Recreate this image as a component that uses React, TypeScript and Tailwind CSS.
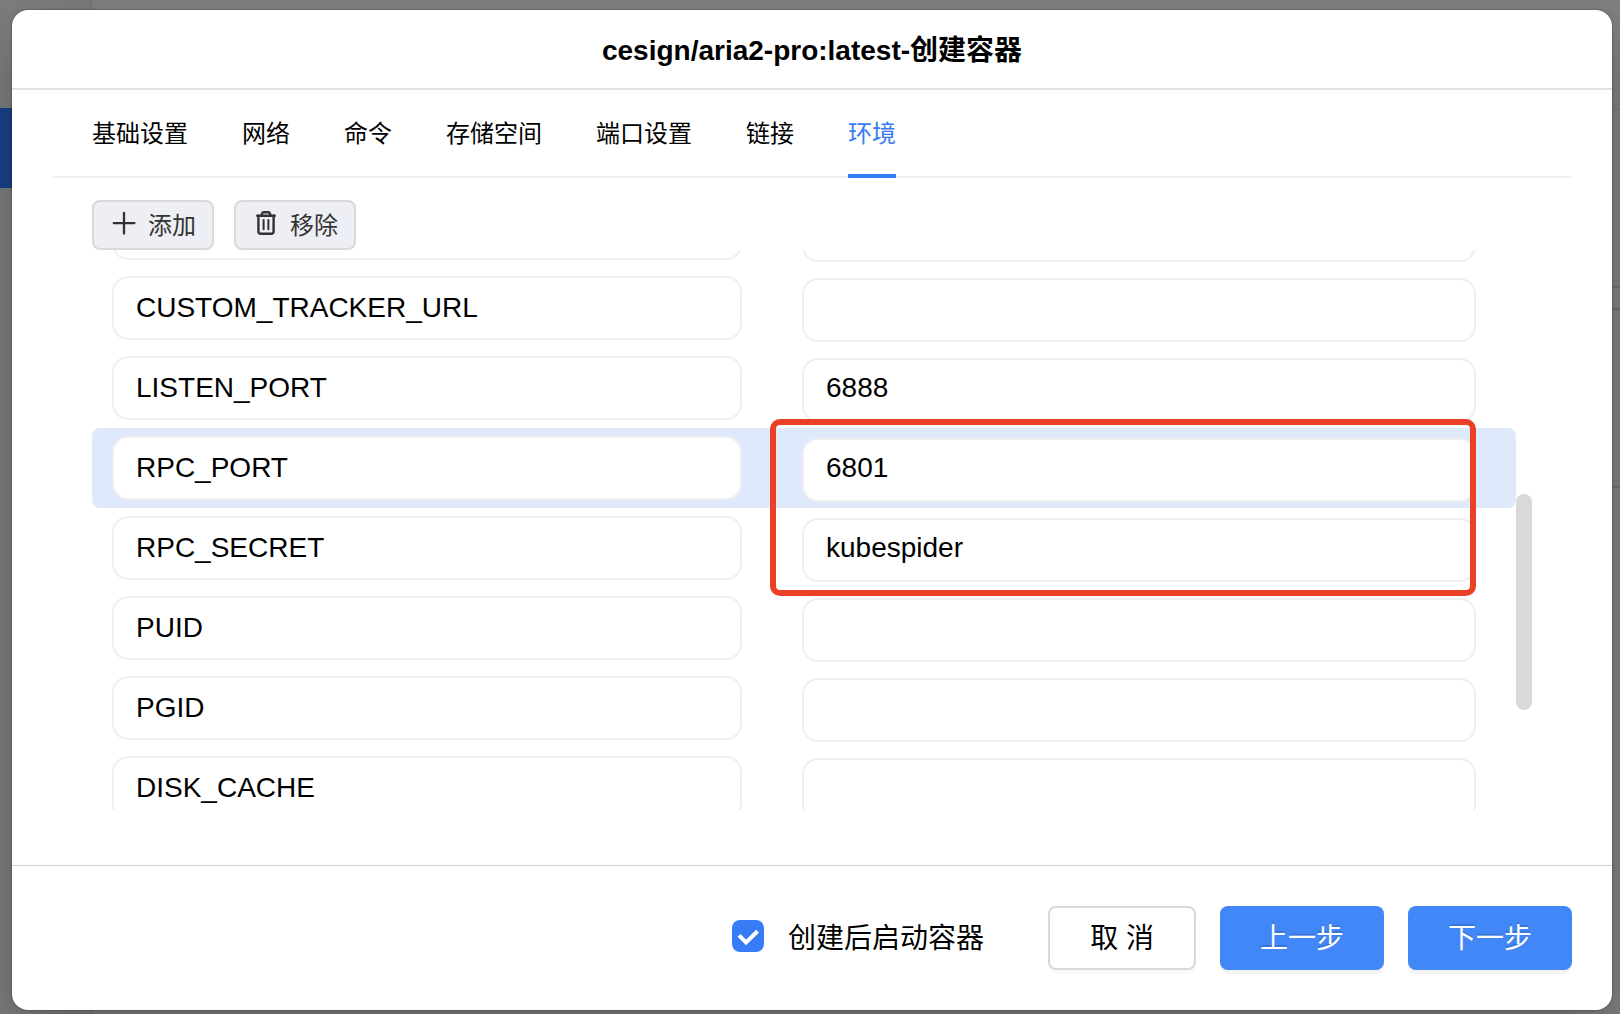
import React from "react";

const tabs = ["基础设置", "网络", "命令", "存储空间", "端口设置", "链接", "环境"];

const rows: { key: string; value: string; active?: boolean }[] = [
  { key: "", value: "" },
  { key: "CUSTOM_TRACKER_URL", value: "" },
  { key: "LISTEN_PORT", value: "6888" },
  { key: "RPC_PORT", value: "6801", active: true },
  { key: "RPC_SECRET", value: "kubespider" },
  { key: "PUID", value: "" },
  { key: "PGID", value: "" },
  { key: "DISK_CACHE", value: "" },
];

function PlusIcon() {
  return (
    <svg width="24" height="24" viewBox="0 0 24 24" fill="none" stroke="#333" strokeWidth="2.3" strokeLinecap="round">
      <path d="M12 2v20.5M1.8 12.2h20.6" />
    </svg>
  );
}

function TrashIcon() {
  return (
    <svg width="24" height="26" viewBox="0 0 24 26" fill="none" stroke="#333" strokeWidth="2.4" strokeLinecap="round" strokeLinejoin="round">
      <path d="M3.2 5.8h17.6M7.4 5.4l.6-1.8q.4-1.4 1.7-1.4h4.6q1.3 0 1.7 1.4l.6 1.8" />
      <path d="M4.4 5.8v15.4a2.6 2.6 0 0 0 2.6 2.6h10a2.6 2.6 0 0 0 2.6-2.6v-15.4" />
      <path d="M9.6 10v9.2M14.4 10v9.2" strokeWidth="2" />
    </svg>
  );
}

function ToolButton({ icon, label }: { icon: React.ReactNode; label: string }) {
  return (
    <button className="flex h-[50px] w-[122px] items-center rounded-lg border-2 border-[#d9d9d9] bg-[#eeeff4] pl-[18px] text-2xl text-[#333]">
      <span className="mb-1">{icon}</span>
      <span className="ml-3 pt-0.5 leading-6">{label}</span>
    </button>
  );
}

function PrimaryButton({ label }: { label: string }) {
  return (
    <button className="h-16 w-[164px] rounded-lg bg-[#4187f7] pt-0.5 text-[28px] text-white shadow-[0_4px_0_rgba(0,0,0,0.045)] [text-shadow:0_-2px_0_rgba(0,0,0,0.12)]">
      {label}
    </button>
  );
}

export default function App() {
  return (
    <div className="relative h-[1014px] w-[1620px] overflow-hidden bg-[#808080] font-['Liberation_Sans','Noto_Sans_CJK_SC',sans-serif] text-black">
      {/* dimmed page behind the dialog */}
      <div className="absolute inset-y-0 left-0 w-[92px] border-r-2 border-[#757575] bg-[#7c7d7f]" />
      <div className="absolute left-0 top-[108px] h-20 w-[92px] bg-[#1d4288]" />
      <div className="absolute right-0 top-[108px] h-0.5 w-10 bg-[#787878]" />
      <div className="absolute right-0 top-[286px] h-0.5 w-10 bg-[#707070]" />
      <div className="absolute right-0 top-[308px] h-0.5 w-10 bg-[#707070]" />
      <div className="absolute right-0 top-[486px] h-0.5 w-10 bg-[#707070]" />

      <div className="relative ml-3 mt-2.5 flex h-[1000px] w-[1600px] flex-col rounded-2xl bg-white shadow-[0_0_2px_rgba(0,0,0,0.5),0_24px_60px_rgba(0,0,0,0.25)]">
        <header className="flex h-20 items-center justify-center border-b-2 border-[#e3e3e3] pt-1 text-[28px] font-bold">
          cesign/aria2-pro:latest-创建容器
        </header>

        <nav className="mx-10 flex h-[88px] gap-[54px] border-b-2 border-[#efefef] pl-10 text-2xl">
          {tabs.map((t, i) => (
            <div
              key={t}
              className={
                i === 6
                  ? "-mb-0.5 h-[88px] border-b-4 border-[#387bf6] pt-7 text-[#387bf6]"
                  : "pt-7"
              }
            >
              {t}
            </div>
          ))}
        </nav>

        <div className="ml-20 mt-[22px] flex gap-5">
          <ToolButton icon={<PlusIcon />} label="添加" />
          <ToolButton icon={<TrashIcon />} label="移除" />
        </div>

        <div className="relative ml-20 flex h-[560px]">
          <div className="flex h-full w-[1424px] flex-col overflow-hidden">
            <div className="-mt-[62px]">
              {rows.map((r, i) => (
                <div key={i} className={r.active ? "flex h-20 rounded-lg bg-[#deeafc]" : "flex h-20"}>
                  <div className="ml-5 mt-2 flex h-16 w-[630px] items-center rounded-2xl border-2 border-[#efefef] bg-white pl-[22px] text-[28px]">
                    {r.key}
                  </div>
                  <div className="ml-[60px] mt-2.5 flex h-16 w-[674px] items-center rounded-2xl border-2 border-[#efefef] bg-white pb-1 pl-[22px] text-[28px]">
                    {r.value}
                  </div>
                </div>
              ))}
            </div>
          </div>
          <div className="mt-[244px] h-[216px] w-4 rounded-full bg-[#d9d9d9]" />
          {/* highlight frame over the RPC values */}
          <div className="absolute left-[678px] top-[169px] h-[177px] w-[706px] rounded-[10px] border-6 border-[#eb4025]" />
        </div>

        <footer className="mt-[55px] flex flex-1 items-start border-t border-[#cfcfcf] pl-[720px] pt-10 text-[28px]">
          <span className="mt-3.5 flex size-8 items-center justify-center rounded-lg bg-[#387bf6]">
            <svg width="32" height="32" viewBox="0 0 32 32" fill="none" stroke="#fff" strokeWidth="4">
              <path d="M7 15.4l7 7L25.6 11.2" />
            </svg>
          </span>
          <span className="ml-6 pt-px leading-16">创建后启动容器</span>
          <button className="ml-16 h-16 w-[148px] rounded-lg border-2 border-[#d9d9d9] bg-white pt-0.5 shadow-[0_4px_0_rgba(0,0,0,0.016)]">
            取 消
          </button>
          <div className="ml-6 flex gap-6">
            <PrimaryButton label="上一步" />
            <PrimaryButton label="下一步" />
          </div>
        </footer>
      </div>
    </div>
  );
}
